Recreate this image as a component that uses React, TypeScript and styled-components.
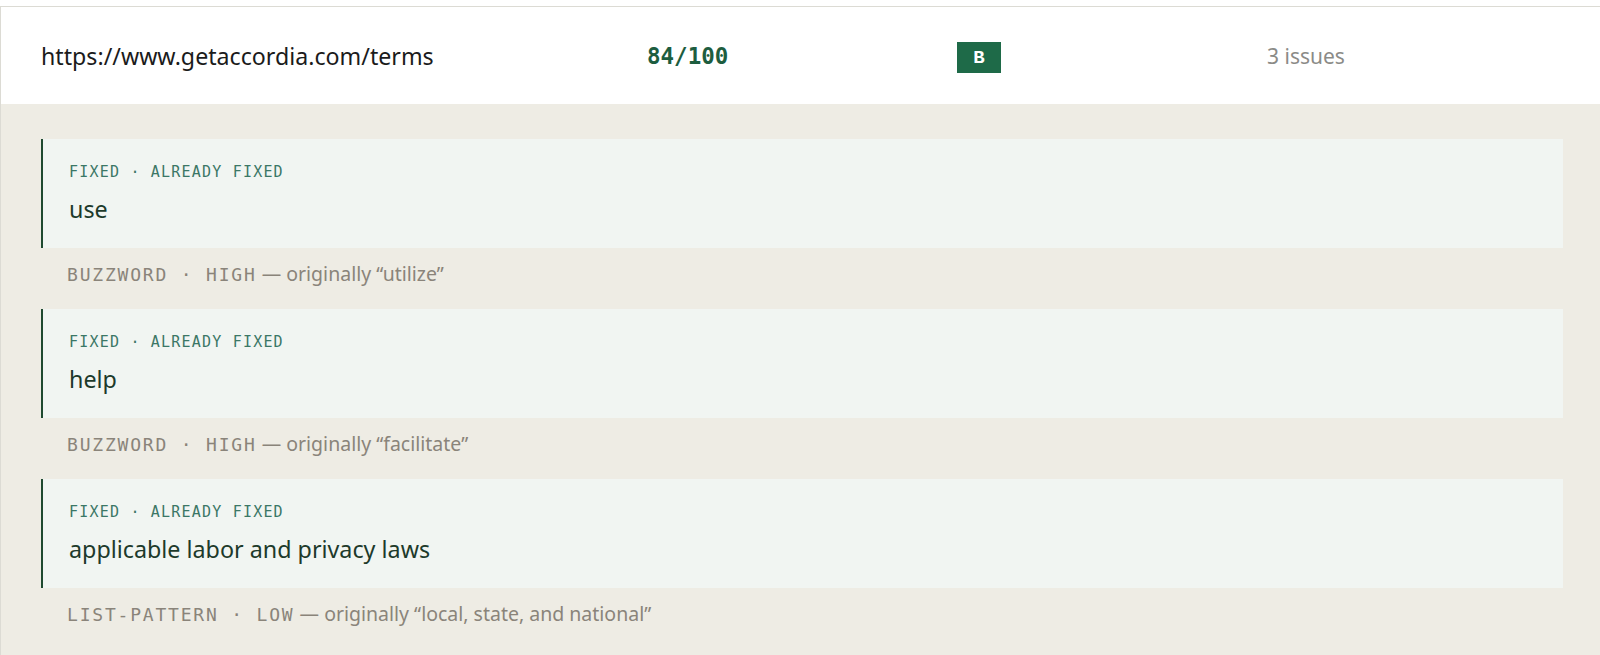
import React from 'react';
import styled, { createGlobalStyle } from 'styled-components';

const GlobalStyle = createGlobalStyle`
  html, body {
    margin: 0;
    padding: 0;
    background: #ffffff;
    font-family: "Noto Sans", "Liberation Sans", sans-serif;
  }
`;

const MONO = `"DejaVu Sans Mono", "Liberation Mono", monospace`;

type Issue = {
  fixed: string;
  category: string;
  severity: string;
  original: string;
};

const issues: Issue[] = [
  { fixed: 'use', category: 'BUZZWORD', severity: 'HIGH', original: 'utilize' },
  { fixed: 'help', category: 'BUZZWORD', severity: 'HIGH', original: 'facilitate' },
  {
    fixed: 'applicable labor and privacy laws',
    category: 'LIST-PATTERN',
    severity: 'LOW',
    original: 'local, state, and national',
  },
];

const Page = styled.div`
  padding-top: 6px;
  width: 100%;
  height: 655px;
  overflow: hidden;
  box-sizing: border-box;
`;

const Table = styled.div`
  border-top: 1px solid #dcdbd4;
  border-left: 1px solid #dcdbd4;
`;

const Row = styled.div`
  display: grid;
  grid-template-columns: 606px 310px 310px 1fr;
  align-items: center;
  height: 97px;
  padding-left: 40px;
  background: #ffffff;
`;

const Url = styled.div`
  font-size: 23.2px;
  color: #1b1b1b;
`;

const Score = styled.div`
  font-family: ${MONO};
  font-weight: 700;
  font-size: 22.5px;
  color: #1d5d3f;
`;

const GradeCell = styled.div`
  display: flex;
  padding-top: 4px;
`;

const Grade = styled.span`
  display: inline-flex;
  align-items: center;
  justify-content: center;
  width: 44px;
  height: 31px;
  background: #1e6a48;
  color: #ffffff;
  font-family: "Liberation Mono", monospace;
  font-weight: 700;
  font-size: 19px;
`;

const IssueCount = styled.div`
  font-size: 21px;
  color: #8b8b87;
`;

const Detail = styled.div`
  background: #eeece4;
  padding: 35px 37px 20px 40px;
`;

const Card = styled.div`
  background: #f1f5f2;
  border-left: 2px solid #1f4a30;
  padding: 23px 26px 24px;
`;

const Label = styled.div`
  font-family: ${MONO};
  font-size: 15px;
  line-height: 20px;
  letter-spacing: 1.2px;
  color: #3b7766;
`;

const Fixed = styled.div`
  margin-top: 12px;
  font-size: 23.3px;
  line-height: 30px;
  color: #1d3a2b;
`;

const Meta = styled.div`
  padding: 14px 0 22px 26px;
  font-size: 19.5px;
  line-height: 24px;
  color: #8a847a;
`;

const MetaCode = styled.span`
  font-family: ${MONO};
  font-size: 18px;
  letter-spacing: 1.8px;
`;

export default function App() {
  return (
    <>
      <GlobalStyle />
      <Page>
        <Table>
          <Row>
            <Url>https://www.getaccordia.com/terms</Url>
            <Score>84/100</Score>
            <GradeCell>
              <Grade>B</Grade>
            </GradeCell>
            <IssueCount>3 issues</IssueCount>
          </Row>
          <Detail>
            {issues.map((issue, i) => (
              <div key={i}>
                <Card>
                  <Label>FIXED · ALREADY FIXED</Label>
                  <Fixed>{issue.fixed}</Fixed>
                </Card>
                <Meta>
                  <MetaCode>
                    {issue.category} · {issue.severity}
                  </MetaCode>{' '}
                  — originally “{issue.original}”
                </Meta>
              </div>
            ))}
          </Detail>
        </Table>
      </Page>
    </>
  );
}
